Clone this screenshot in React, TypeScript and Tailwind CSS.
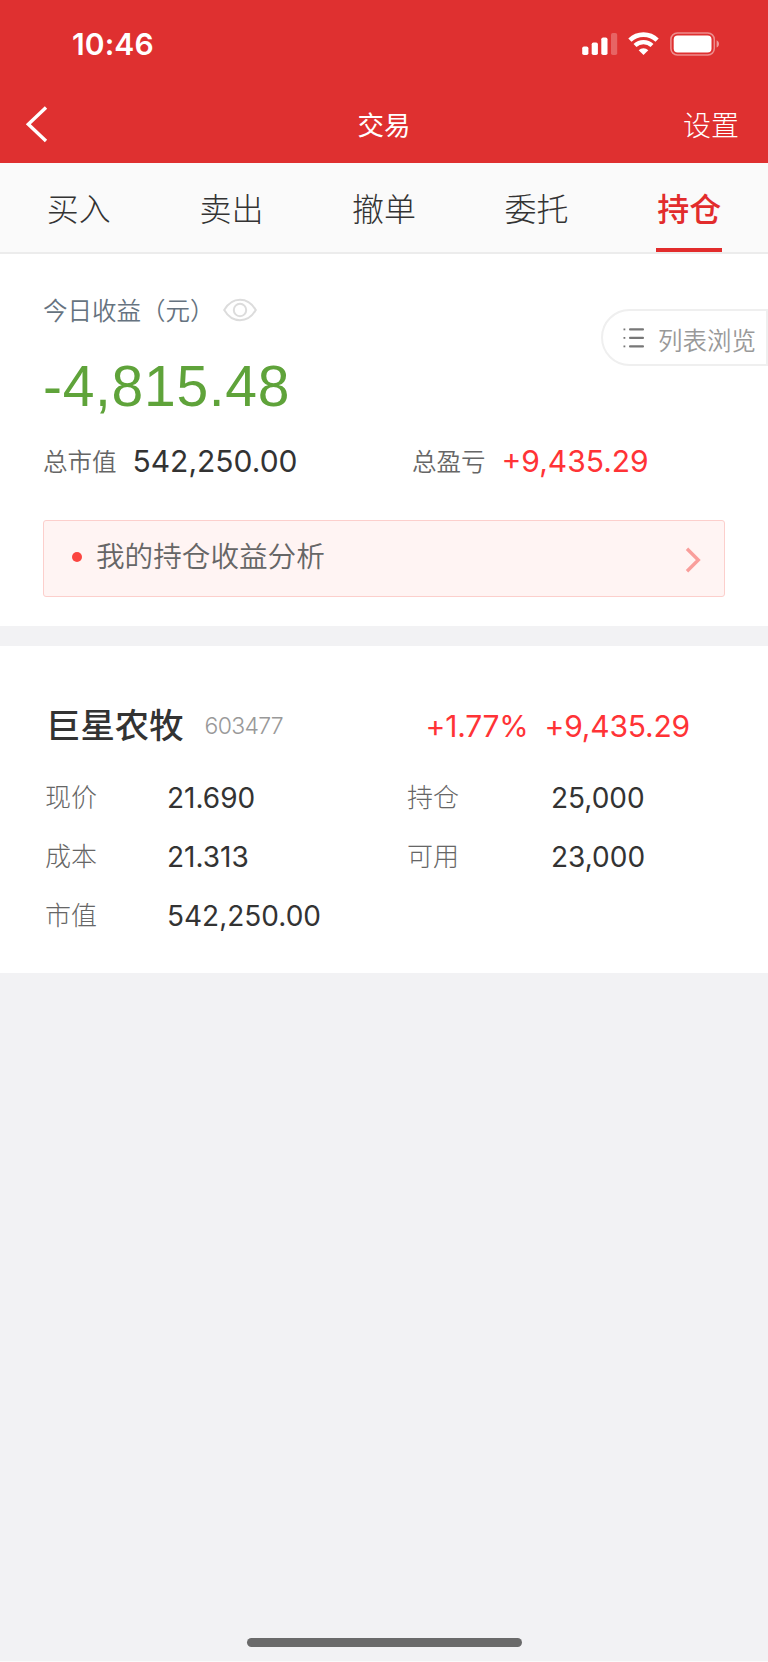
const tabs = ["买入", "卖出", "撤单", "委托", "持仓"];

const details = [
  { label: "现价", value: "21.690" },
  { label: "持仓", value: "25,000" },
  { label: "成本", value: "21.313" },
  { label: "可用", value: "23,000" },
  { label: "市值", value: "542,250.00" },
];

function StatusBar() {
  return (
    <div className="flex h-[87px] items-center justify-between pl-[72px] pr-[48px]">
      <span className="font-['Inter',sans-serif] text-[30px] leading-[36px] font-semibold tracking-[0.1px]">10:46</span>
      <div className="flex items-center">
        <svg width="36" height="24" viewBox="0 0 36 24" fill="currentColor">
          <rect x="0.2" y="14.5" width="6.2" height="8.5" rx="1.8" />
          <rect x="9.7" y="10.5" width="6.2" height="12.5" rx="1.8" />
          <rect x="19.3" y="5.5" width="6.2" height="17.5" rx="1.8" />
          <rect x="29" y="1" width="6.2" height="22" rx="1.8" opacity="0.25" />
        </svg>
        <svg className="ml-[10px]" width="31" height="24" viewBox="0 0 31 24" fill="none" stroke="currentColor">
          <path d="M1.9 8.2a19.4 19.4 0 0 1 27.2 0" strokeWidth="4.6" />
          <path d="M7 13.6a12.2 12.2 0 0 1 17 0" strokeWidth="4.2" />
          <path d="M10.7 18.3a6.8 6.8 0 0 1 9.6 0L15.5 23z" fill="currentColor" stroke="none" />
        </svg>
        <svg className="ml-[11px]" width="50" height="24" viewBox="0 0 50 24" fill="none">
          <rect x="0.9" y="1" width="43.4" height="22" rx="6.5" stroke="white" strokeOpacity="0.45" strokeWidth="1.5" />
          <rect x="3.7" y="3.6" width="37.8" height="16.8" rx="4" fill="white" />
          <path d="M46.6 8.3c3.2 1.4 3.2 5.9 0 7.3z" fill="white" fillOpacity="0.5" />
        </svg>
      </div>
    </div>
  );
}

function Header() {
  return (
    <header className="h-[163px] bg-[#df3030] text-white">
      <StatusBar />
      <div className="grid h-[74px] grid-cols-3 items-center px-[25px]">
        <svg width="24" height="38" viewBox="0 0 24 38" fill="none" stroke="currentColor" strokeWidth="3.4">
          <path d="M21 2.5 3.3 19.2 21 36" />
        </svg>
        <h1 className="text-center text-[26.5px] leading-[36px]">交易</h1>
        <span className="mr-[4px] text-right text-[28px] leading-[36px] font-light">设置</span>
      </div>
    </header>
  );
}

function TabBar() {
  return (
    <nav className="flex h-[91px] border-b-2 border-[#ececec] bg-[#fafafa] px-[2.5px]">
      {tabs.map((tab) => (
        <div key={tab} className="flex flex-1 justify-center">
          {tab === "持仓" ? (
            <span className="h-[89px] border-b-4 border-[#e22c2c] px-[1px] text-[32px] leading-[89px] font-medium text-[#e22c2c]">{tab}</span>
          ) : (
            <span className="text-[32px] leading-[89px] font-light text-[#333]">{tab}</span>
          )}
        </div>
      ))}
    </nav>
  );
}

function Summary() {
  return (
    <section className="relative h-[372px] bg-white px-[43px] pt-[38px]">
      <div className="flex h-[36px] items-center text-[24.5px] leading-[36px] font-[350] text-[#667380]">
        <span>今日收益（元）</span>
        <svg className="ml-[8px]" width="34" height="24" viewBox="0 0 34 24" fill="none" stroke="#dcdcdc" strokeWidth="2">
          <path d="M1.2 12C5 5.5 10.6 1.8 17 1.8S29 5.5 32.8 12C29 18.5 23.4 22.2 17 22.2S5 18.5 1.2 12z" />
          <circle cx="17" cy="12" r="6.2" />
        </svg>
      </div>
      <div className="mt-[26px] font-['Liberation_Sans',Arial,sans-serif] text-[57px] leading-[64px] tracking-[0.7px] text-[#5fa33a]">-4,815.48</div>
      <div className="mt-[25px] flex h-[36px] items-center text-[24.5px] leading-[36px] font-[350] text-[#666]">
        <div className="flex w-[369px] items-center">
          <span>总市值</span>
          <span className="ml-[16px] font-['Inter',sans-serif] text-[30px] font-normal text-[#333]">542,250.00</span>
        </div>
        <span>总盈亏</span>
        <span className="ml-[16px] font-['Inter',sans-serif] text-[30px] font-normal text-[#ff3336]">+9,435.29</span>
      </div>
      <div className="mt-[41px] flex h-[77px] items-center rounded-[3px] border border-[#fccfcc] bg-[#fff4f3] pl-[28px] pr-[23px]">
        <span className="mb-[3px] size-[10px] rounded-full bg-[#fb4540]" />
        <span className="ml-[14px] pb-[7px] text-[28.6px] leading-[40px] font-[350] text-[#666]">我的持仓收益分析</span>
        <svg className="ml-auto mt-[2px]" width="16" height="26" viewBox="0 0 16 26" fill="none" stroke="#f99e9b" strokeWidth="3.4">
          <path d="M2 1.7 13.3 13 2 24.3" />
        </svg>
      </div>
      <button className="absolute right-0 top-[55px] flex h-[57px] w-[167px] items-center rounded-l-full border-2 border-[#efefef] bg-white pl-[20px]">
        <svg width="22" height="22" viewBox="0 0 22 22" fill="#777">
          <rect x="0.5" y="1.5" width="1.8" height="1.8" />
          <rect x="0.5" y="10" width="1.8" height="1.8" />
          <rect x="0.5" y="18.5" width="1.8" height="1.8" />
          <rect x="6" y="1.2" width="15" height="2.4" rx="1" />
          <rect x="6" y="9.7" width="15" height="2.4" rx="1" />
          <rect x="6" y="18.2" width="15" height="2.4" rx="1" />
        </svg>
        <span className="ml-[13px] mt-[4px] whitespace-nowrap text-[24.5px] leading-[36px] font-[350] text-[#999]">列表浏览</span>
      </button>
    </section>
  );
}

function Holding() {
  return (
    <section className="mt-[20px] h-[327px] bg-white pl-[46px] pt-[59px]">
      <div className="flex h-[40px] items-center">
        <h2 className="pb-[4px] text-[34.4px] leading-[40px] font-medium text-[#333]">巨星农牧</h2>
        <span className="ml-[21px] pt-[1px] font-['Inter',sans-serif] text-[23px] leading-[40px] font-light tracking-[-0.7px] text-[#999]">603477</span>
        <div className="ml-auto flex gap-[16px] pr-[78px] pt-[2px] font-['Inter',sans-serif] text-[30px] leading-[40px] tracking-[-0.2px] text-[#ff3336]">
          <span>+1.77%</span>
          <span>+9,435.29</span>
        </div>
      </div>
      <dl className="-ml-[1px] mt-[21px] grid grid-cols-[362px_1fr]">
        {details.map((item, i) => (
          <div key={item.label} className="flex h-[59.2px] items-center">
            <dt className={`text-[26px] leading-[36px] font-light text-[#666] ${i % 2 ? "w-[144px]" : "w-[122px]"}`}>{item.label}</dt>
            <dd className="pt-[4px] font-['Inter',sans-serif] text-[28px] leading-[36px] text-[#333]">{item.value}</dd>
          </div>
        ))}
      </dl>
    </section>
  );
}

export default function App() {
  return (
    <div className="flex h-[1662px] w-[768px] flex-col border-b border-[#fafafa] bg-[#f2f2f4] font-['Noto_Sans_CJK_SC',sans-serif]">
      <Header />
      <TabBar />
      <Summary />
      <Holding />
      <div className="mx-auto mb-[14px] mt-auto h-[9px] w-[275px] rounded-full bg-[#6a6a6a]" />
    </div>
  );
}
